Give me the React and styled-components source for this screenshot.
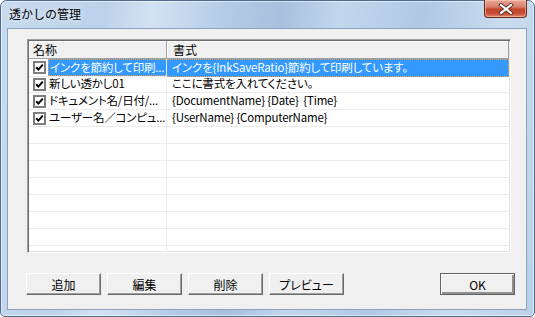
import React from "react";
import styled, { createGlobalStyle, css } from "styled-components";

const GlobalStyle = createGlobalStyle`
  html, body {
    margin: 0;
    padding: 0;
    background: #ffffff;
  }
  body {
    font-family: "Noto Sans CJK JP", "Liberation Sans", sans-serif;
  }
`;

const UI_FONT = `"Noto Sans CJK JP", "Liberation Sans", sans-serif`;

export const Window = styled.div`
  box-sizing: border-box;
  width: 535px;
  height: 317px;
  display: flex;
  flex-direction: column;
  padding: 0 7px 6px 6px;
  border: 1px solid #4f6b8f;
  border-radius: 7px 7px 5px 5px;
  background: linear-gradient(
    100deg,
    #c7daee 0%,
    #bcd2ea 18%,
    #d3e2f2 26%,
    #b5cce6 38%,
    #a8c0de 48%,
    #c2d7ed 58%,
    #b0c8e3 72%,
    #c9dcef 86%,
    #bad0e9 100%
  );
  box-shadow: inset 0 0 0 1px rgba(255, 255, 255, 0.55);
`;

export const TitleBar = styled.div`
  height: 27px;
  display: flex;
  justify-content: space-between;
  align-items: flex-start;
`;

export const Title = styled.span`
  margin: 5px 0 0 2px;
  font-family: ${UI_FONT};
  font-size: 12px;
  line-height: 16px;
  color: #000;
  text-shadow: 0 0 6px rgba(255, 255, 255, 0.9);
`;

export const CloseButton = styled.div`
  width: 43px;
  height: 18px;
  margin-top: -1px;
  display: flex;
  align-items: center;
  justify-content: center;
  box-sizing: border-box;
  border: 1px solid #6b2a1e;
  border-top: none;
  border-radius: 0 0 4px 4px;
  background: linear-gradient(
    180deg,
    #e7a898 0%,
    #d8826d 40%,
    #c3432a 55%,
    #c8503a 80%,
    #e08b6d 100%
  );
  box-shadow: inset 0 0 0 1px rgba(255, 210, 190, 0.5);
`;

export const Content = styled.div`
  flex: 1;
  display: flex;
  flex-direction: column;
  gap: 20px;
  box-sizing: border-box;
  padding: 10px 11px 14px 18px;
  background: #f0f0f0;
  border: 1px solid #8ca1bd;
`;

export const ListBox = styled.div`
  height: 214px;
  margin: 0 4px 0 1px;
  box-sizing: border-box;
  background: #ffffff;
  border-top: 1px solid #a0a0a0;
  border-left: 1px solid #a0a0a0;
  border-right: 1px solid #ffffff;
  border-bottom: 1px solid #ffffff;
  box-shadow: inset 1px 1px 0 #696969, inset -1px -1px 0 #e3e3e3;
  padding: 1px;
  overflow: hidden;
  font-family: ${UI_FONT};
  font-size: 11.5px;
  letter-spacing: -0.2px;
  font-feature-settings: "palt";
`;

const columns = css`
  display: grid;
  grid-template-columns: 138px 1fr;
`;

export const Header = styled.div`
  ${columns};
  height: 18px;
  box-sizing: border-box;
  background: #f0f0f0;
  border-bottom: 1px solid #a0a0a0;
  border-right: 1px solid #a0a0a0;
  font-size: 12px;
  letter-spacing: 0;
`;

export const HeaderCell = styled.div`
  padding-left: ${(p) => p.$pad}px;
  line-height: 17px;
  color: #000;
  box-shadow: inset 1px 1px 0 #ffffff;
  border-right: 1px solid #a0a0a0;

  &:last-child {
    border-right: none;
  }
`;

export const Row = styled.div`
  ${columns};
  height: 17px;
`;

export const NameCell = styled.div`
  display: flex;
  align-items: stretch;
  border-right: 1px solid #ececec;
  border-bottom: 1px solid #ececec;
  min-width: 0;
`;

export const CheckSlot = styled.div`
  width: 17px;
  flex: none;
  display: flex;
  align-items: center;
  justify-content: flex-end;
  padding-right: 1px;
`;

const selectedCss = css`
  background: #3399ff;
  color: #ffffff;
  border-top: 1px dotted #f7a24a;
  border-bottom: 1px dotted #f7a24a;
`;

export const NameText = styled.div`
  flex: 1;
  min-width: 0;
  margin-left: 1px;
  padding-left: 1px;
  box-sizing: border-box;
  line-height: 15px;
  white-space: nowrap;
  overflow: hidden;
  color: #000;
  ${(p) =>
    p.$selected &&
    css`
      ${selectedCss};
      border-left: 1px dotted #f7a24a;
    `}
`;

export const ValueCell = styled.div`
  padding-left: 5px;
  box-sizing: border-box;
  line-height: 15px;
  white-space: pre;
  overflow: hidden;
  color: #000;
  border-bottom: 1px solid #ececec;
  ${(p) =>
    p.$selected &&
    css`
      ${selectedCss};
      border-right: 1px dotted #f7a24a;
    `}
`;

export const ButtonRow = styled.div`
  display: flex;
  gap: 6px;
`;

export const Button = styled.div`
  width: 75px;
  height: 22px;
  box-sizing: border-box;
  display: flex;
  align-items: center;
  justify-content: center;
  font-family: ${UI_FONT};
  font-size: 12px;
  font-feature-settings: "palt";
  color: #000;
  background: #f0f0f0;
  border-top: 1px solid #ffffff;
  border-left: 1px solid #ffffff;
  border-right: 1px solid #696969;
  border-bottom: 1px solid #696969;
  box-shadow: inset -1px -1px 0 #a0a0a0;
  ${(p) =>
    p.$default &&
    css`
      margin-left: auto;
      border: 1px solid #646464;
      box-shadow: inset 1px 1px 0 #ffffff, inset -2px -2px 0 #909090;
    `}
`;

const CheckBox = () => (
  <svg width="13" height="13" viewBox="0 0 13 13">
    <rect x="1" y="1" width="11" height="11" fill="#fff" stroke="#7d7d7d" strokeWidth="2" />
    <path d="M3.2 6.2 L5.4 8.6 L9.8 3.6" fill="none" stroke="#000" strokeWidth="2" />
  </svg>
);

const CloseGlyph = () => (
  <svg width="16" height="12" viewBox="0 0 16 12">
    <path d="M3 2 L13 10 M13 2 L3 10" stroke="#5a2a22" strokeWidth="4" strokeLinecap="square" />
    <path d="M3 2 L13 10 M13 2 L3 10" stroke="#ffffff" strokeWidth="2.2" strokeLinecap="square" />
  </svg>
);

const entries = [
  { name: "インクを節約して印刷...", format: "インクを{InkSaveRatio}節約して印刷しています。", selected: true },
  { name: "新しい透かし01", format: "ここに書式を入れてください。" },
  { name: "ドキュメント名/日付/...", format: "{DocumentName} {Date}  {Time}" },
  { name: "ユーザー名／コンピュ...", format: "{UserName} {ComputerName}" },
];

const buttons = ["追加", "編集", "削除", "プレビュー"];

const App = () => {
  const blanks = Array.from({ length: 9 });

  return (
    <>
      <GlobalStyle />
      <Window>
        <TitleBar>
          <Title>透かしの管理</Title>
          <CloseButton>
            <CloseGlyph />
          </CloseButton>
        </TitleBar>

        <Content>
          <ListBox>
            <Header>
              <HeaderCell $pad={4}>名称</HeaderCell>
              <HeaderCell $pad={6}>書式</HeaderCell>
            </Header>

            {entries.map((e) => (
              <Row key={e.name}>
                <NameCell>
                  <CheckSlot>
                    <CheckBox />
                  </CheckSlot>
                  <NameText $selected={e.selected}>{e.name}</NameText>
                </NameCell>
                <ValueCell $selected={e.selected}>{e.format}</ValueCell>
              </Row>
            ))}

            {blanks.map((_, i) => (
              <Row key={i}>
                <NameCell />
                <ValueCell />
              </Row>
            ))}
          </ListBox>

          <ButtonRow>
            {buttons.map((b) => (
              <Button key={b}>{b}</Button>
            ))}
            <Button $default>OK</Button>
          </ButtonRow>
        </Content>
      </Window>
    </>
  );
};

export default App;
